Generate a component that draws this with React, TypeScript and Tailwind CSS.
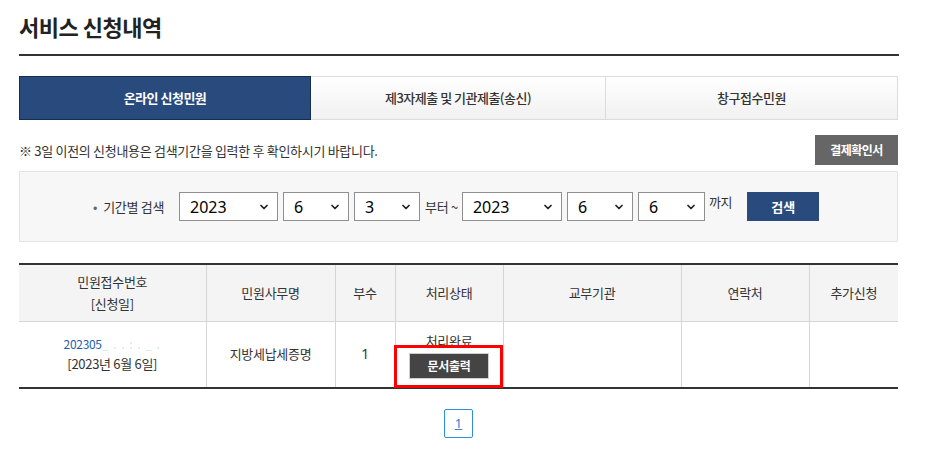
import { ChevronDown } from 'lucide-react'

const headers = ['민원사무명', '부수', '처리상태', '교부기관', '연락처', '추가신청']

function Select({ value, width }: { value: string; width: string }) {
  return (
    <div
      className={
        'flex h-[29px] items-center justify-between border border-[#8f8f8f] bg-white pl-[10px] pr-[7px] ' +
        width
      }
    >
      <span className="font-['Noto_Sans',sans-serif] text-[16px] leading-none text-black">{value}</span>
      <ChevronDown size={12} strokeWidth={3.5} className="text-[#222]" />
    </div>
  )
}

export default function App() {
  return (
    <div className="min-h-[461px] bg-white pl-[19px] font-['Noto_Sans_CJK_KR','Noto_Sans',sans-serif] text-[#333]">
      <div className="w-[880px]">
        <div className="h-[56px] border-b-2 border-[#333] pt-[10px]">
          <h1 className="text-[22px] font-bold leading-[32px] tracking-[-0.5px] text-[#222]">서비스 신청내역</h1>
        </div>

        <div className="mt-[20px] flex h-[44px] w-[879px] text-[13px]">
          <div className="flex w-[292px] items-center justify-center border border-[#142d52] bg-[#294a7c] font-bold tracking-[-0.5px] text-white">
            온라인 신청민원
          </div>
          <div className="flex w-[294px] items-center justify-center border-y border-[#dcdcdc] bg-gradient-to-b from-white to-[#f1f1f1] font-medium tracking-[-0.5px] text-[#333]">
            제3자제출 및 기관제출(송신)
          </div>
          <div className="flex w-[293px] items-center justify-center border border-[#dcdcdc] bg-gradient-to-b from-white to-[#f1f1f1] font-medium tracking-[-0.5px] text-[#333]">
            창구접수민원
          </div>
        </div>

        <div className="mt-[15px] flex h-[30px] w-[879px] items-center justify-between">
          <p className="text-[13px] leading-none tracking-[-0.3px] text-[#333]">
            ※ 3일 이전의 신청내용은 검색기간을 입력한 후 확인하시기 바랍니다.
          </p>
          <button className="h-[30px] w-[83px] bg-[#666] text-[12px] font-bold tracking-[-0.5px] text-white">
            결제확인서
          </button>
        </div>

        <div className="mt-[6px] flex h-[71px] w-[879px] items-center border border-[#e4e4e4] bg-[#f7f7f7] pl-[73px] text-[13px]">
          <span className="mr-[15px] tracking-[-0.3px]">
            <span className="mr-[6px] text-[#666]">•</span>기간별 검색
          </span>
          <div className="flex items-center gap-[5px]">
            <Select value="2023" width="w-[99px]" />
            <Select value="6" width="w-[66px]" />
            <Select value="3" width="w-[66px]" />
          </div>
          <span className="ml-[5px] mr-[4px] tracking-[-0.3px]">부터 ~</span>
          <div className="flex items-center gap-[5px]">
            <Select value="2023" width="w-[100px]" />
            <Select value="6" width="w-[66px]" />
            <Select value="6" width="w-[67px]" />
          </div>
          <span className="ml-[4px] mb-[10px] tracking-[-0.3px]">까지</span>
          <button className="ml-[15px] h-[29px] w-[72px] bg-[#294a7c] text-[13px] font-bold text-white">검색</button>
        </div>

        <table className="mt-[21px] w-[879px] table-fixed border-collapse border-y-2 border-[#333] text-center text-[13px] tracking-[-0.3px]">
          <colgroup>
            <col className="w-[187px]" />
            <col className="w-[129px]" />
            <col className="w-[60px]" />
            <col className="w-[108px]" />
            <col className="w-[178px]" />
            <col className="w-[128px]" />
            <col className="w-[89px]" />
          </colgroup>
          <thead>
            <tr className="h-[57px] border-b border-[#d5d5d5] bg-[#f4f4f4] leading-[22px]">
              <th className="font-normal">
                민원접수번호
                <br />
                [신청일]
              </th>
              {headers.map((h) => (
                <th key={h} className="border-l border-[#d5d5d5] font-normal">
                  {h}
                </th>
              ))}
            </tr>
          </thead>
          <tbody>
            <tr className="h-[67px] leading-[20px]">
              <td>
                <span className="text-[12px] text-[#1f5fa8]">202305</span>
                <span className="text-[12px] tracking-[1px] text-[#d3e3f3]">_ . . : . _ .</span>
                <br />
                [2023년 6월 6일]
              </td>
              <td className="border-l border-[#d5d5d5]">지방세납세증명</td>
              <td className="border-l border-[#d5d5d5] font-['Noto_Sans',sans-serif] text-[14px]">1</td>
              <td className="relative border-l border-[#d5d5d5]">
                <div className="flex flex-col items-center pt-[2px]">
                  <span className="leading-[20px]">처리완료</span>
                  <button className="mt-[2px] h-[26px] w-[80px] border border-[#cfcfcf] bg-[#444] text-[12px] font-bold text-white">
                    문서출력
                  </button>
                </div>
                <div className="absolute left-[-2px] top-[23px] h-[43px] w-[109px] border-[3px] border-[#ff0000]" />
              </td>
              <td className="border-l border-[#d5d5d5]" />
              <td className="border-l border-[#d5d5d5]" />
              <td className="border-l border-[#d5d5d5]" />
            </tr>
          </tbody>
        </table>

        <div className="mt-[20px] flex w-[879px] justify-center">
          <span className="flex h-[29px] w-[29px] items-center justify-center rounded-[2px] border border-[#2b8fe0] font-['Noto_Sans',sans-serif] text-[13px] text-[#2b7fd0] underline">
            1
          </span>
        </div>
      </div>
    </div>
  )
}
